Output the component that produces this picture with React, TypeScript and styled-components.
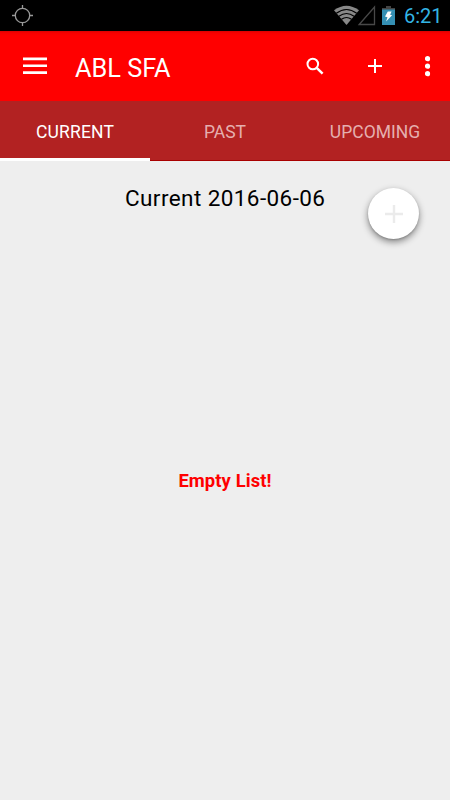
import React from "react";
import styled, { createGlobalStyle } from "styled-components";

const GlobalStyle = createGlobalStyle`
  * { box-sizing: border-box; }
  body { margin: 0; background: #eeeeee; font-family: Roboto, "Liberation Sans", sans-serif; }
`;

const Screen = styled.div`
  width: 450px;
  height: 800px;
  display: flex;
  flex-direction: column;
  background: #eeeeee;
  overflow: hidden;
`;

const StatusBar = styled.header`
  height: 31px;
  flex: none;
  display: flex;
  justify-content: space-between;
  background: #000;
  padding: 0 8px 0 12px;
`;

const StatusIcons = styled.div`
  display: flex;
  align-items: center;
  svg { display: block; }
`;

const Clock = styled.time`
  width: 38px;
  margin-left: 7px;
  font-size: 20px;
  line-height: 31px;
  padding-top: 1px;
  color: #33b5e5;
  white-space: nowrap;
`;

const AppBar = styled.nav`
  height: 70px;
  flex: none;
  display: flex;
  align-items: center;
  background: linear-gradient(#dc0000, #f80000 2px, #ff0000 5px);
  padding-left: 23px;
`;

const IconButton = styled.button<{ $width: number }>`
  width: ${(p) => p.$width}px;
  height: 70px;
  padding: 0;
  border: 0;
  background: none;
  display: flex;
  align-items: center;
  justify-content: center;
  svg { display: block; }
`;

const Title = styled.h1`
  flex: 1;
  margin: 5px 0 0 28px;
  font-size: 25.3px;
  font-weight: 400;
  line-height: 30px;
  color: #fff;
`;

const Tabs = styled.div`
  height: 60px;
  flex: none;
  display: grid;
  grid-template-columns: repeat(3, 1fr);
  background: #b22222;
`;

const Tab = styled.div<{ $active?: boolean }>`
  display: flex;
  align-items: center;
  justify-content: center;
  padding-top: 4px;
  font-size: 17.5px;
  letter-spacing: ${(p) => (p.$active ? 0.15 : 0)}px;
  color: ${(p) => (p.$active ? "#fff" : "#e5afaf")};
  border-bottom: ${(p) => (p.$active ? "3px solid #fff" : "1px solid #a80000")};
  padding-bottom: ${(p) => (p.$active ? 0 : 2)}px;
`;

const Content = styled.main`
  flex: 1;
  display: grid;
  grid-template-columns: 125px minmax(0, 1fr) 125px;
  grid-template-rows: 100px 1fr;
`;

const DateHeading = styled.h2`
  grid-column: 2;
  margin: 22px 0 0;
  font-size: 22.5px;
  line-height: 30px;
  font-weight: 400;
  letter-spacing: 0.41px;
  text-align: center;
  color: #000;
  white-space: nowrap;
`;

const AddButton = styled.button`
  width: 51px;
  height: 51px;
  margin: 27px 0 0 43px;
  padding: 0;
  border: 0;
  border-radius: 50%;
  background: #fff;
  display: flex;
  align-items: center;
  justify-content: center;
  box-shadow: 0 3px 7px rgba(0, 0, 0, 0.45), 0 1px 2px rgba(0, 0, 0, 0.15);
`;

const EmptyMessage = styled.p`
  grid-column: 1 / -1;
  margin: 209px 0 0;
  font-size: 18.4px;
  line-height: 22px;
  font-weight: 700;
  letter-spacing: 0.1px;
  text-align: center;
  color: #ff0000;
`;

export default function App() {
  return (
    <Screen>
      <GlobalStyle />
      <StatusBar>
        <StatusIcons>
          <svg width="22" height="22" viewBox="0 0 22 22" fill="none" stroke="#999" strokeWidth="1.3">
            <circle cx="10.5" cy="10.5" r="7.2" />
            <path d="M10.5 0v4M10.5 17v4M0 10.5h4M17 10.5h4" />
          </svg>
        </StatusIcons>
        <StatusIcons>
          <svg width="63" height="31" viewBox="0 0 63 31">
            <path d="M0 10.3Q12.5 1.2 25 10.3L12.5 25Z" fill="#888" />
            <path d="M2.3 13.3Q12.5 5.8 22.7 13.3M4.9 16.3Q12.5 10.7 20.1 16.3M7.5 19.3Q12.5 15.6 17.5 19.3" fill="none" stroke="#000" strokeWidth="1.1" />
            <path d="M25.2 24.5L40.5 7V24.5Z" fill="none" stroke="#484848" strokeWidth="1.3" />
            <path d="M52 6h5v2h4v17H48V8h4Z" fill="#348fb3" />
            <path d="M52 6h5v2h4v1.5H48V8h4Z" fill="#444" />
            <path d="M53.8 11.5h3.8l-1.5 3.3 2 .5-6 6.1 1.4-4.2-2.5-.8Z" fill="#fff" />
          </svg>
          <Clock>6:21</Clock>
        </StatusIcons>
      </StatusBar>
      <AppBar>
        <IconButton $width={24} aria-label="Menu">
          <svg width="24" height="18" viewBox="0 0 24 18" fill="#fff">
            <path d="M0 .5h24v2.7H0ZM0 7.4h24v2.7H0ZM0 14.3h24v2.7H0Z" />
          </svg>
        </IconButton>
        <Title>ABL SFA</Title>
        <IconButton $width={60} aria-label="Search">
          <svg width="18" height="18" viewBox="0 0 18 18" fill="none" stroke="#fff">
            <circle cx="6.8" cy="7" r="5.3" strokeWidth="2" />
            <path d="M10.7 10.9L16.6 16.7" strokeWidth="2.5" />
          </svg>
        </IconButton>
        <IconButton $width={60} aria-label="Add">
          <svg width="14" height="14" viewBox="0 0 14 14" stroke="#fff" strokeWidth="2">
            <path d="M7 0v14M0 7h14" />
          </svg>
        </IconButton>
        <IconButton $width={45} aria-label="More options">
          <svg width="6" height="22" viewBox="0 0 6 22" fill="#fff">
            <circle cx="2.5" cy="3.7" r="2.6" />
            <circle cx="2.5" cy="11.2" r="2.6" />
            <circle cx="2.5" cy="18.7" r="2.6" />
          </svg>
        </IconButton>
      </AppBar>
      <Tabs>
        <Tab $active>CURRENT</Tab>
        <Tab>PAST</Tab>
        <Tab>UPCOMING</Tab>
      </Tabs>
      <Content>
        <DateHeading>Current 2016-06-06</DateHeading>
        <AddButton aria-label="Add item">
          <svg width="18" height="18" viewBox="0 0 18 18" stroke="#ebebeb" strokeWidth="2.4">
            <path d="M9 0v18M0 9h18" />
          </svg>
        </AddButton>
        <EmptyMessage>Empty List!</EmptyMessage>
      </Content>
    </Screen>
  );
}
